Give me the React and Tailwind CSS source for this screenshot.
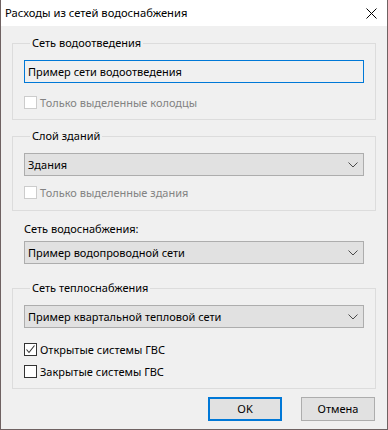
import React from "react";

const font = { fontFamily: '"Noto Sans", "Segoe UI", sans-serif' };

function Chevron() {
  return (
    <svg width="10" height="6" viewBox="0 0 10 6" className="shrink-0">
      <polyline points="0.5,0.5 5,5 9.5,0.5" fill="none" stroke="#4a4a4a" strokeWidth="1" />
    </svg>
  );
}

function Combo({ value }) {
  return (
    <div className="h-[23px] flex items-center justify-between border border-[#adadad] bg-[#e1e1e1] pl-[3px] pr-[5px]">
      <span>{value}</span>
      <Chevron />
    </div>
  );
}

function Check({ label, checked, disabled }) {
  return (
    <div className="flex items-center h-[13px]">
      <div
        className={
          "w-[13px] h-[13px] flex items-center justify-center bg-white border " +
          (disabled ? "border-[#cccccc]" : "border-[#333333]")
        }
      >
        {checked && (
          <svg width="11" height="11" viewBox="0 0 11 11">
            <polyline points="1.5,5.5 4,8.5 9.5,1.5" fill="none" stroke="#333" strokeWidth="1.1" />
          </svg>
        )}
      </div>
      <span className={"ml-[3px] " + (disabled ? "text-[#838383]" : "text-black")}>{label}</span>
    </div>
  );
}

function Group({ title, children, className }) {
  return (
    <fieldset className={"border border-[#dcdcdc] px-[11px] " + className}>
      <legend className="ml-[6px] px-[2px] leading-[16px]">{title}</legend>
      {children}
    </fieldset>
  );
}

export default function App() {
  return (
    <div
      style={font}
      className="w-[388px] h-[430px] bg-[#f0f0f0] text-[11px] leading-[16px] text-black border-l border-r border-b border-[#6f6262] flex flex-col"
    >
      {/* Title bar */}
      <div className="h-[26px] bg-white flex items-center justify-between pl-[4px] pr-[10px] shrink-0">
        <span className="text-[11.2px]">Расходы из сетей водоснабжения</span>
        <svg width="11" height="11" viewBox="0 0 11 11">
          <line x1="0.5" y1="0.5" x2="10.5" y2="10.5" stroke="#000" strokeWidth="1" />
          <line x1="10.5" y1="0.5" x2="0.5" y2="10.5" stroke="#000" strokeWidth="1" />
        </svg>
      </div>

      <div className="flex flex-col px-[11px] pt-[9px]">
        <Group title="Сеть водоотведения" className="pt-[9px] pb-[10px]">
          <div className="h-[23px] flex items-center border border-[#0078d7] pl-[3px]">
            Пример сети водоотведения
          </div>
          <div className="mt-[13px]">
            <Check label="Только выделенные колодцы" disabled />
          </div>
        </Group>

        <Group title="Слой зданий" className="mt-[8px] pt-[9px] pb-[11px]">
          <Combo value="Здания" />
          <div className="mt-[10px]">
            <Check label="Только выделенные здания" disabled />
          </div>
        </Group>

        <div className="px-[12px] mt-[10px]">
          <div>Сеть водоснабжения:</div>
          <div className="mt-[4px]">
            <Combo value="Пример водопроводной сети" />
          </div>
        </div>

        <Group title="Сеть теплоснабжения" className="mt-[16px] pt-[9px] pb-[10px]">
          <Combo value="Пример квартальной тепловой сети" />
          <div className="mt-[15px]">
            <Check label="Открытые системы ГВС" checked />
          </div>
          <div className="mt-[9px]">
            <Check label="Закрытые системы ГВС" />
          </div>
        </Group>

        <div className="flex justify-end gap-[19px] mt-[8px] pr-[1px]">
          <button className="w-[74px] h-[24px] bg-[#e1e1e1] border-2 border-[#0078d7] flex items-center justify-center">
            OK
          </button>
          <button className="w-[74px] h-[24px] bg-[#e1e1e1] border border-[#adadad] flex items-center justify-center">
            Отмена
          </button>
        </div>
      </div>
    </div>
  );
}
